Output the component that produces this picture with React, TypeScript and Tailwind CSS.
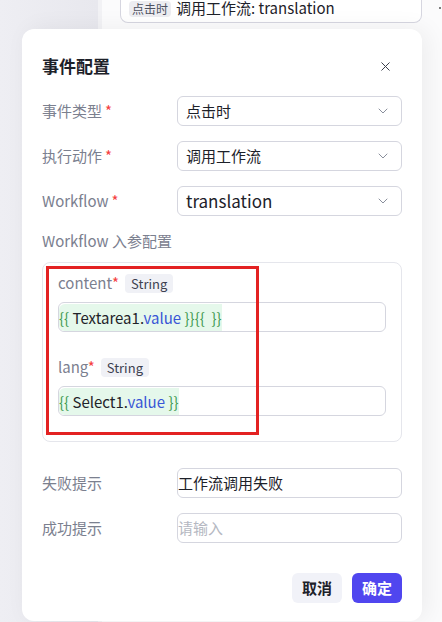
import React from "react";
import { ChevronDown, X } from "lucide-react";

const font = { fontFamily: '"Noto Sans CJK SC", "Noto Sans", sans-serif' };

const Star = () => <span className="ml-[3px] text-[#f53f3f]">*</span>;

function Select({ value, big }: { value: string; big?: boolean }) {
  return (
    <div className="flex h-[30px] w-[225px] items-center justify-between rounded-md border border-[#d5d6df] bg-white pl-[8px] pr-[10px]">
      <span className={big ? "text-[17px] leading-[28px] text-[#1d2129]" : "text-[15px] leading-[28px] text-[#1d2129]"}>
        {value}
      </span>
      <ChevronDown className="h-4 w-4 text-[#8a8f9c]" strokeWidth={1.5} />
    </div>
  );
}

function FormRow({ label, required, children }: { label: string; required?: boolean; children: React.ReactNode }) {
  return (
    <div className="flex h-[30px] items-center">
      <div className="w-[135px] text-[15px] leading-[22px] text-[#7b808f]">
        {label}
        {required && <Star />}
      </div>
      {children}
    </div>
  );
}

function Brace({ t }: { t: string }) {
  return <span className="text-[#3f9a52]">{t}</span>;
}

function CodeInput({ name, extra }: { name: string; extra?: boolean }) {
  return (
    <div className="flex h-[30px] items-center rounded-md border border-[#d5d6df] bg-white">
      <span className="whitespace-pre rounded-l-md bg-[#e5f8eb] text-[15px] leading-[27px] text-[#1f2329]">
        <Brace t="{{" /> {name}.<span className="text-[#3856d6]">value</span> <Brace t="}}" />
        {extra && (
          <>
            <Brace t="{{" />
            {"  "}
            <Brace t="}}" />
          </>
        )}
      </span>
    </div>
  );
}

function Param({ name, children }: { name: string; children: React.ReactNode }) {
  return (
    <div className="flex flex-col gap-[9px]">
      <div className="flex h-[20px] items-center gap-[6px]">
        <span className="text-[15px] leading-[20px] text-[#7b808f]">
          {name}
          <span className="text-[#f53f3f]">*</span>
        </span>
        <span className="rounded bg-[#f0f1f6] px-[6px] text-[13px] leading-[19px] text-[#3d4150]">String</span>
      </div>
      {children}
    </div>
  );
}

export default function App() {
  return (
    <div className="relative flex h-[622px] w-[442px] overflow-hidden bg-[#f6f6f8]" style={font}>
      <div className="h-full w-[98px] bg-gradient-to-r from-[#eeeef3] to-[#e8e8ee]" />
      <div className="h-full w-[4px] bg-[#f2f2f5]" />
      <div className="relative h-full flex-1 bg-[#fbfbfc]">
        <div className="ml-[18px] mt-[-12px] flex h-[35px] w-[302px] items-end gap-[5px] rounded-b-lg border border-t-0 border-[#d6d6e0] bg-white px-[8px] pb-[5px]">
          <span className="rounded bg-[#ededf1] px-[3px] text-[12px] leading-[16px] text-[#4e5261]">点击时</span>
          <span className="text-[15px] leading-[18px] text-[#1d2129]">调用工作流: translation</span>
        </div>
        <div className="absolute right-[1px] top-[7px] h-[2px] w-[2px] rounded-full bg-[#555]" />
      </div>

      <div className="absolute left-[22px] top-[29px] flex h-[592px] w-[400px] flex-col rounded-xl bg-white px-[20px] shadow-[6px_0_24px_rgba(0,0,0,0.06)]">
        <div className="mt-[25px] flex h-[24px] items-center justify-between">
          <span className="text-[17px] font-semibold leading-[24px] text-[#1d2129]">事件配置</span>
          <X className="mr-[9px] h-[15px] w-[15px] text-[#3b3f4c]" strokeWidth={1.6} />
        </div>

        <div className="mt-[18px] flex flex-col gap-[15px]">
          <FormRow label="事件类型" required>
            <Select value="点击时" />
          </FormRow>
          <FormRow label="执行动作" required>
            <Select value="调用工作流" />
          </FormRow>
          <FormRow label="Workflow" required>
            <Select value="translation" big />
          </FormRow>
        </div>

        <div className="mt-[14px] text-[15px] leading-[22px] text-[#7b808f]">Workflow 入参配置</div>

        <div className="relative mt-[10px] flex h-[180px] flex-col gap-[25px] rounded-lg border border-[#e5e6ec] px-[15px] pt-[10px]">
          <Param name="content">
            <CodeInput name="Textarea1" extra />
          </Param>
          <Param name="lang">
            <CodeInput name="Select1" />
          </Param>
          <div className="absolute left-[3px] top-[3px] h-[169px] w-[213px] border-[3px] border-[#e32222]" />
        </div>

        <div className="mt-[26px] flex flex-col gap-[15px]">
          <FormRow label="失败提示">
            <div className="flex h-[30px] w-[225px] items-center rounded-md border border-[#d5d6df] text-[15px] text-[#1d2129]">
              工作流调用失败
            </div>
          </FormRow>
          <FormRow label="成功提示">
            <div className="flex h-[30px] w-[225px] items-center rounded-md border border-[#d5d6df] text-[15px] text-[#b5b8c2]">
              请输入
            </div>
          </FormRow>
        </div>

        <div className="mt-[30px] flex justify-end gap-[10px]">
          <button className="h-[30px] w-[50px] rounded-md bg-[#f1f2f8] text-[15px] font-bold text-[#1d2129]">取消</button>
          <button className="h-[30px] w-[50px] rounded-md bg-[#5046ef] text-[15px] font-bold text-white">确定</button>
        </div>
      </div>
    </div>
  );
}
